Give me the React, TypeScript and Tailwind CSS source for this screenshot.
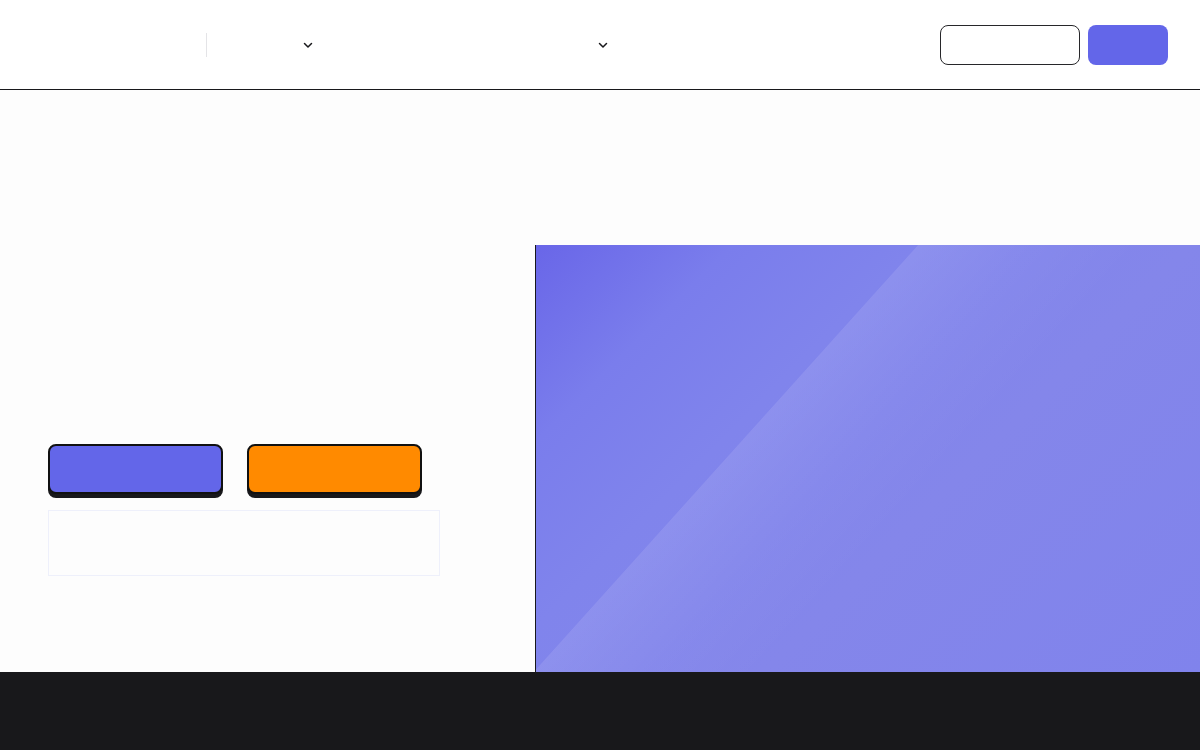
import React from "react";

function Chevron() {
  return (
    <svg width="10" height="7" viewBox="0 0 10 7" fill="none" className="block">
      <path d="M1.5 1.5L5 5L8.5 1.5" stroke="#18181b" strokeWidth="1.5" strokeLinecap="round" strokeLinejoin="round" />
    </svg>
  );
}

export default function App() {
  return (
    <div className="w-[1200px] h-[750px] overflow-hidden bg-[#fdfdfd] flex flex-col" style={{ fontFamily: "Inter, 'Liberation Sans', sans-serif" }}>
      <header className="h-[90px] shrink-0 bg-white border-b border-[#18181b] flex items-center pl-[206px] pr-[32px]">
        <div className="w-px h-[24px] bg-[#e4e4e7]" />
        <div className="ml-[96px] mt-[1px]">
          <Chevron />
        </div>
        <div className="ml-[285px] mt-[1px]">
          <Chevron />
        </div>
        <div className="ml-auto flex items-center gap-[8px]">
          <button className="w-[140px] h-[40px] rounded-[8px] border border-[#27272a] bg-white" />
          <button className="w-[80px] h-[40px] rounded-[8px] bg-[#6366e9]" />
        </div>
      </header>
      <main className="h-[582px] shrink-0 flex">
        <div className="w-[535px] shrink-0 flex flex-col justify-end pl-[48px] pb-[96px]">
          <div className="flex gap-[24px]">
            <button className="w-[175px] h-[50px] rounded-[8px] border-2 border-[#111] bg-[#6366e9] shadow-[0_4px_0_#18181b]" />
            <button className="w-[175px] h-[50px] rounded-[8px] border-2 border-[#111] bg-[#ff8a00] shadow-[0_4px_0_#18181b]" />
          </div>
          <div className="mt-[16px] w-[392px] h-[66px] border border-[#eef0fb] bg-[#fdfdfd]" />
        </div>
        <div className="flex-1 self-end h-[427px] border-l border-[#18181b] relative overflow-hidden bg-[linear-gradient(135deg,#6966e8_0%,#7a7dec_18%,#8084ec_35%,#8486ea_60%,#8083ec_100%)]">
          <div className="absolute inset-0 bg-[linear-gradient(132deg,transparent_36.4%,rgba(255,255,255,0.1)_36.5%,rgba(255,255,255,0.03)_48%,transparent_58%)]" />
        </div>
      </main>
      <footer className="flex-1 bg-[#18181b]" />
    </div>
  );
}
